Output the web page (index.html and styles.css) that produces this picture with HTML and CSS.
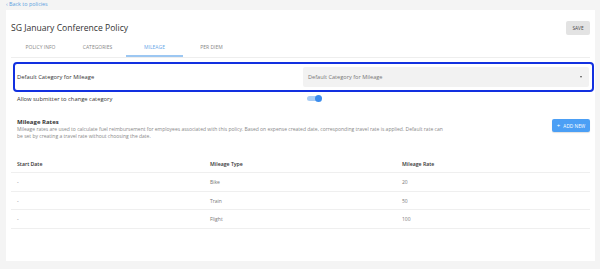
FILE: index.html
```html
<!DOCTYPE html>
<html>
<head>
<meta charset="utf-8">
<link rel="stylesheet" href="styles.css">
</head>
<body>
<div class="back"><a href="#">‹ Back to policies</a></div>
<div class="card">
  <div class="header">
    <h1 class="title">SG January Conference Policy</h1>
    <button class="save">SAVE</button>
  </div>
  <div class="tabs">
    <div class="tab">POLICY INFO</div>
    <div class="tab">CATEGORIES</div>
    <div class="tab active">MILEAGE</div>
    <div class="tab">PER DIEM</div>
  </div>
  <div class="highlight">
    <div class="field-label">Default Category for Mileage</div>
    <div class="select">
      <span>Default Category for Mileage</span>
      <span class="caret"></span>
    </div>
  </div>
  <div class="toggle-row">
    <div class="field-label">Allow submitter to change category</div>
    <div class="toggle"><span class="knob"></span></div>
  </div>
  <div class="section-head">
    <div class="section-text">
      <div class="section-title">Mileage Rates</div>
      <p class="desc">Mileage rates are used to calculate fuel reimbursement for employees associated with this policy. Based on expense created date, corresponding travel rate is applied. Default rate can be set by creating a travel rate without choosing the date.</p>
    </div>
    <button class="add"><span class="plus">+</span> ADD NEW</button>
  </div>
  <div class="table">
    <div class="row head"><div>Start Date</div><div>Mileage Type</div><div>Mileage Rate</div></div>
    <div class="row"><div>-</div><div>Bike</div><div>20</div></div>
    <div class="row"><div>-</div><div>Train</div><div>50</div></div>
    <div class="row"><div>-</div><div>Flight</div><div>100</div></div>
  </div>
</div>
</body>
</html>
```

FILE: styles.css
```css
* { box-sizing: border-box; }
html, body { margin: 0; padding: 0; }
body {
  background: #f4f4f4;
  font-family: "Open Sans", "Noto Sans", sans-serif;
  color: #333;
  width: 600px;
  height: 269px;
  overflow: hidden;
}
.back {
  height: 10px;
  line-height: 8px;
  padding-left: 6px;
  font-size: 5.4px;
}
.back a { color: #5a9fe0; text-decoration: none; }
.card {
  background: #fff;
  margin: 0 5px 0 6px;
  height: 251px;
  padding: 0 5px;
}
.header {
  height: 27px;
  display: flex;
  align-items: center;
  justify-content: space-between;
  padding-top: 9px;
}
.title {
  margin: 0;
  font-size: 8.6px;
  font-weight: 400;
  color: #333;
}
.save {
  border: none;
  background: #e3e3e3;
  border-radius: 2px;
  font-family: inherit;
  font-size: 4.8px;
  color: #444;
  width: 24px;
  height: 14px;
  padding: 0;
}
.tabs {
  display: flex;
  height: 21px;
  border-bottom: 1px solid #eeeeee;
  padding-left: 1px;
}
.tab {
  width: 57px;
  display: flex;
  align-items: center;
  justify-content: center;
  font-size: 5px;
  color: #888;
  padding-top: 1px;
  border-bottom: 2px solid transparent;
}
.tab.active {
  color: #6aa8e8;
  border-bottom-color: #9cc7f2;
}
.highlight {
  margin: 4px -4px 0 2px;
  height: 30px;
  border: 2px solid #1230e0;
  border-radius: 4px;
  display: flex;
  align-items: center;
  padding: 0 3px 0 2px;
}
.field-label {
  font-size: 5.8px;
  color: #333;
}
.highlight .field-label { flex: 0 0 286px; }
.select {
  flex: 1;
  height: 20px;
  background: #f2f2f2;
  border-radius: 2px;
  display: flex;
  align-items: center;
  justify-content: space-between;
  padding: 0 7px 0 5px;
  font-size: 5.6px;
  color: #777;
}
.caret {
  width: 0;
  height: 0;
  border-left: 1.5px solid transparent;
  border-right: 1.5px solid transparent;
  border-top: 2px solid #555;
}
.toggle-row {
  display: flex;
  align-items: center;
  height: 13px;
  padding-left: 6px;
}
.toggle-row .field-label { flex: 0 0 290px; }
.toggle {
  width: 14px;
  height: 5px;
  background: #a9cdf5;
  border-radius: 3px;
  position: relative;
}
.knob {
  position: absolute;
  right: -0.5px;
  top: -1px;
  width: 7px;
  height: 7px;
  border-radius: 50%;
  background: #3b8ced;
}
.section-head {
  display: flex;
  justify-content: space-between;
  align-items: flex-start;
  padding: 13px 0 0 6px;
}
.section-title {
  font-size: 6px;
  font-weight: 700;
  color: #333;
  line-height: 8px;
}
.desc {
  margin: 0;
  width: 428px;
  font-size: 5px;
  line-height: 7px;
  color: #888;
}
.add {
  margin-top: 1px;
  border: none;
  background: #4b9ff5;
  color: #fff;
  border-radius: 2px;
  font-family: inherit;
  font-size: 4.8px;
  width: 38px;
  height: 13px;
  padding: 0;
  box-shadow: 0 1px 1px rgba(0,0,0,0.12);
}
.plus { font-size: 6px; margin-right: 2px; }
.table { margin-top: 15px; }
.row {
  display: grid;
  grid-template-columns: 193px 192px 1fr;
  height: 18.7px;
  align-items: center;
  padding-left: 6px;
  border-bottom: 1px solid #efefef;
  font-size: 5px;
  color: #777;
}
.row.head {
  height: 18px;
  font-weight: 600;
  color: #333;
  font-size: 5.2px;
}
```
